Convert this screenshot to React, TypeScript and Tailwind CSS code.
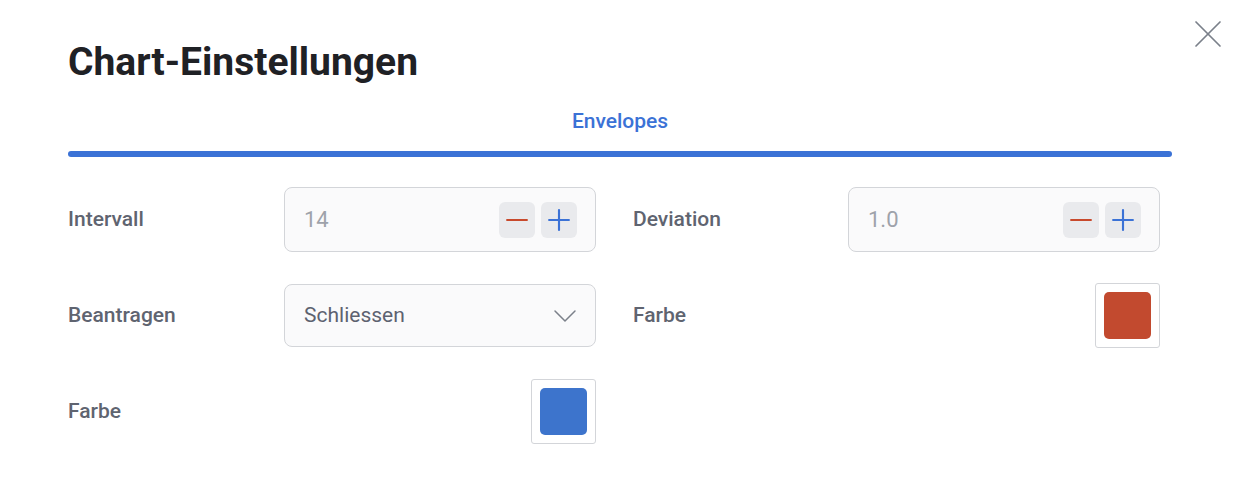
import { X, Minus, Plus, ChevronDown } from "lucide-react"

function Stepper({ value }: { value: string }) {
  return (
    <div className="w-[312px] h-[65px] flex items-center justify-between pl-[19px] pr-[18px] border border-[#d3d5d9] rounded-[8px] bg-[#fafafb]">
      <span className="text-[22px] text-[#9ea2aa]">{value}</span>
      <div className="flex gap-[6px]">
        <button className="w-[36px] h-[36px] flex items-center justify-center rounded-[6px] bg-[#e9eaed]">
          <Minus className="w-[34px] h-[34px] text-[#c8492c]" strokeWidth={1.5} />
        </button>
        <button className="w-[36px] h-[36px] flex items-center justify-center rounded-[6px] bg-[#e9eaed]">
          <Plus className="w-[34px] h-[34px] text-[#3b72d6]" strokeWidth={1.5} />
        </button>
      </div>
    </div>
  )
}

function Swatch({ color }: { color: string }) {
  return (
    <div className="w-[312px] flex justify-end">
      <div className="w-[65px] h-[65px] p-[8px] border border-[#d3d5d9] rounded-[3px] bg-white">
        <div className={`w-full h-full rounded-[5px] ${color}`}></div>
      </div>
    </div>
  )
}

export default function App() {
  const label = "text-[21px] font-medium text-[#5f6470]"

  return (
    <div
      className="relative w-[1242px] h-[488px] bg-white px-[68px] pt-[40px]"
      style={{ fontFamily: "Roboto, 'Noto Sans', sans-serif" }}
    >
      <button className="absolute top-[10px] right-[10px] text-[#7b808a]">
        <X className="w-[48px] h-[48px]" strokeWidth={0.85} />
      </button>

      <h1 className="text-[39px] leading-[44px] font-bold text-[#1f2125]">Chart-Einstellungen</h1>

      <div className="mt-[23px] w-[1104px]">
        <div className="text-center text-[21px] leading-[28px] font-medium text-[#3b72d6]">Envelopes</div>
        <div className="mt-[16px] h-[6px] rounded-full bg-[#3b72d6]"></div>
      </div>

      <div className="mt-[30px] grid grid-cols-[528px_527px] gap-x-[37px] gap-y-[31px]">
        <div className="flex items-center h-[65px]">
          <span className={`w-[216px] ${label}`}>Intervall</span>
          <Stepper value="14" />
        </div>
        <div className="flex items-center h-[65px]">
          <span className={`w-[215px] ${label}`}>Deviation</span>
          <Stepper value="1.0" />
        </div>

        <div className="flex items-center h-[65px]">
          <span className={`w-[216px] ${label}`}>Beantragen</span>
          <div className="w-[312px] h-[63px] flex items-center justify-between pl-[19px] pr-[10px] border border-[#d3d5d9] rounded-[8px] bg-[#fafafb]">
            <span className="text-[21px] text-[#5d6270]">Schliessen</span>
            <ChevronDown className="w-[40px] h-[40px] text-[#7b808a]" strokeWidth={0.9} />
          </div>
        </div>
        <div className="flex items-center h-[65px]">
          <span className={`w-[215px] ${label}`}>Farbe</span>
          <Swatch color="bg-[#c24a2f]" />
        </div>

        <div className="flex items-center h-[65px]">
          <span className={`w-[216px] ${label}`}>Farbe</span>
          <Swatch color="bg-[#3d74cc]" />
        </div>
      </div>
    </div>
  )
}
